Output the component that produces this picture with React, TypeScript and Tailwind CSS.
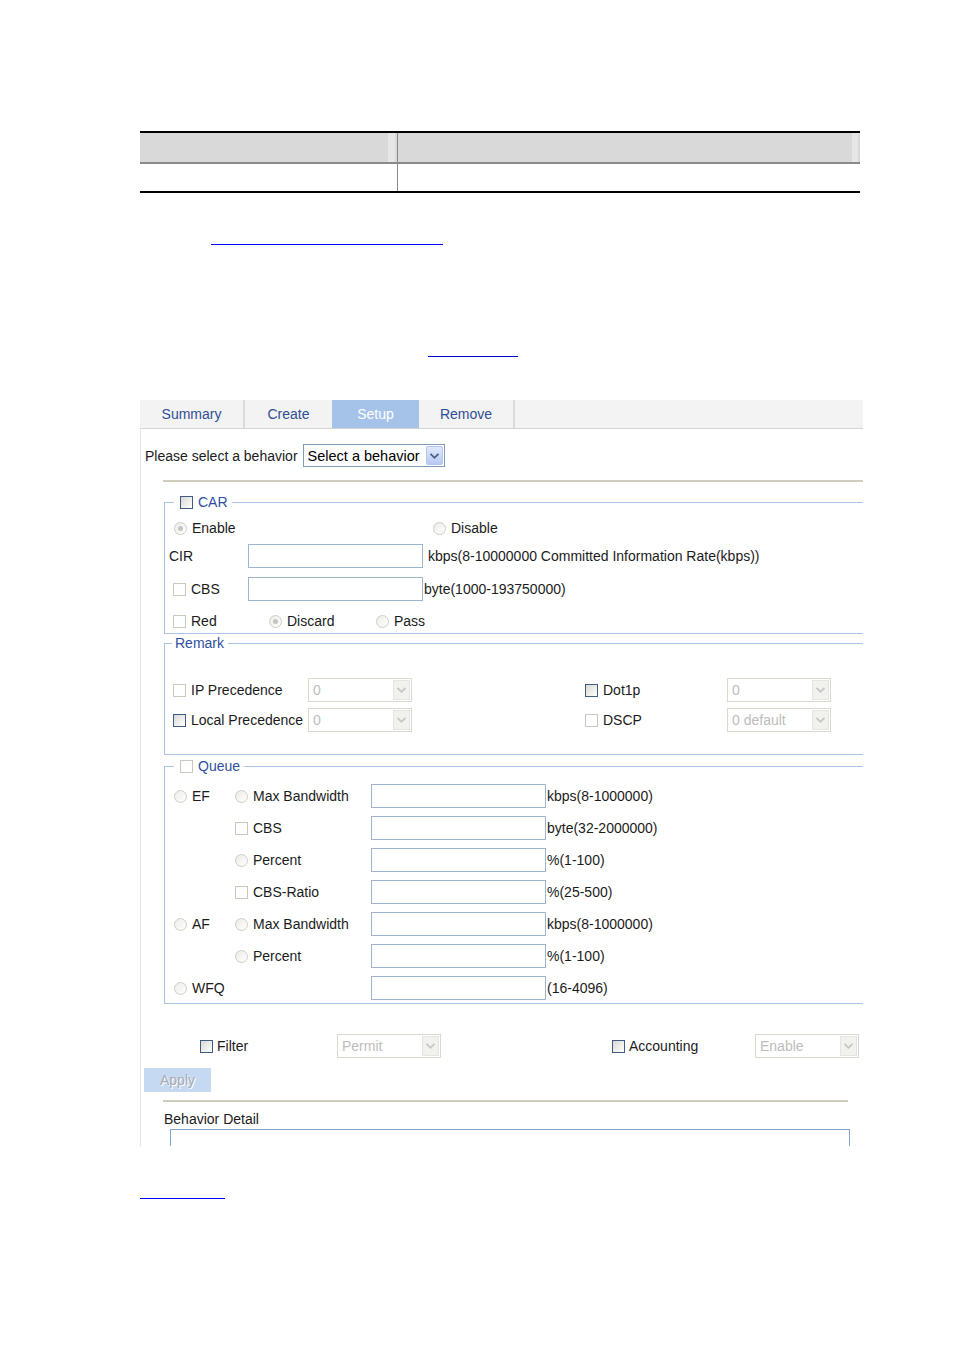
import React from "react";

const label = "text-[14px] leading-[18px] text-[#1b1b1b] whitespace-nowrap";
const legendText = "text-[14px] leading-[18px] text-[#3050a0] whitespace-nowrap";

function Box({ on }: { on?: boolean }) {
  return on ? (
    <span className="inline-block w-[13px] h-[13px] shrink-0 border border-[#3f5c82] bg-linear-to-br from-[#d9d9d3] to-white" />
  ) : (
    <span className="inline-block w-[13px] h-[13px] shrink-0 border border-[#cac8bd] bg-white" />
  );
}

function Radio({ dot }: { dot?: boolean }) {
  return (
    <span className="inline-flex items-center justify-center w-[13px] h-[13px] shrink-0 rounded-full border border-[#cfcdc3] bg-linear-to-br from-[#ecebe6] to-white">
      {dot && <span className="w-[5px] h-[5px] rounded-full bg-[#c4c4c4]" />}
    </span>
  );
}

function TextBox({ w }: { w: string }) {
  return <span className={`block h-[24px] shrink-0 border border-[#9db6cf] bg-white ${w}`} />;
}

function Chevron({ color }: { color: string }) {
  return (
    <svg width="11" height="8" viewBox="0 0 11 8">
      <path d="M1.5 1.8 L5.5 5.8 L9.5 1.8" fill="none" stroke={color} strokeWidth="1.8" />
    </svg>
  );
}

function DisabledSelect({ value }: { value: string }) {
  return (
    <div className="flex items-center justify-between w-[104px] h-[24px] shrink-0 border border-[#dbd8cd] bg-white pl-[4px] pr-[1px]">
      <span className="text-[14px] leading-[18px] text-[#bdbdbd] whitespace-nowrap">{value}</span>
      <span className="flex items-center justify-center w-[17px] h-[20px] bg-[#f1f1ed] border border-[#e6e4dc]">
        <Chevron color="#c6c6c6" />
      </span>
    </div>
  );
}

function CheckLabel({ on, text, w }: { on?: boolean; text: string; w: string }) {
  return (
    <div className={`flex items-center gap-[5px] shrink-0 ${w}`}>
      <Box on={on} />
      <span className={label}>{text}</span>
    </div>
  );
}

function RadioLabel({ dot, text, w }: { dot?: boolean; text: string; w: string }) {
  return (
    <div className={`flex items-center gap-[5px] shrink-0 ${w}`}>
      <Radio dot={dot} />
      <span className={label}>{text}</span>
    </div>
  );
}

function QueueRow({
  first,
  second,
  unit,
}: {
  first?: React.ReactNode;
  second?: React.ReactNode;
  unit: string;
}) {
  return (
    <div className="flex items-center h-[24px] ml-[5px]">
      <div className="w-[61px] shrink-0">{first}</div>
      <div className="w-[136px] shrink-0">{second}</div>
      <TextBox w="w-[175px]" />
      <span className={`${label} ml-[1px] text-[13.5px]`}>{unit}</span>
    </div>
  );
}

export default function App() {
  return (
    <div className="w-[954px] h-[1350px] bg-white pt-[131px] font-['Liberation_Sans',Arial,sans-serif]">
      {/* table */}
      <div className="ml-[140px] w-[720px] border-t-2 border-b-2 border-black">
        <div className="grid grid-cols-[258px_1fr] h-[31px] bg-[#d9d9d9] border-b-2 border-[#8a8a8a]">
          <div className="flex justify-end border-r border-[#8a8a8a]">
            <span className="w-[7px] h-full bg-[#e6e6e6] mr-[2px]" />
          </div>
          <div className="flex justify-end">
            <span className="w-[6px] h-full bg-[#e6e6e6] mr-[2px]" />
          </div>
        </div>
        <div className="grid grid-cols-[258px_1fr] h-[27px]">
          <div className="border-r border-[#8a8a8a]" />
          <div />
        </div>
      </div>

      <a className="block ml-[211px] mt-[51px] w-[232px] h-[1px] border-b border-[#0000ff]" />
      <a className="block ml-[428px] mt-[111px] w-[90px] h-[1px] border-b border-[#0000cc]" />

      {/* panel */}
      <div className="ml-[140px] mt-[43px] w-[723px] h-[746px] overflow-hidden flex flex-col">
        <div className="flex h-[29px] shrink-0 bg-[#f3f3f3] border-b border-[#d4d4d4] text-[14px] text-[#2f4f94]">
          <div className="w-[105px] flex items-center justify-center border-r-2 border-[#dadada] pt-[1px]">Summary</div>
          <div className="w-[87px] flex items-center justify-center pt-[1px]">Create</div>
          <div className="w-[87px] flex items-center justify-center bg-[#a5c3e8] text-white pt-[1px]">Setup</div>
          <div className="w-[96px] flex items-center justify-center border-r-2 border-[#dadada] pt-[1px]">Remove</div>
        </div>

        <div className="flex-1 border-l border-[#e3e3e3]">
          <div className="flex items-center h-[23px] mt-[15px] ml-[4px]">
            <span className={label}>Please select a behavior</span>
            <div className="flex items-center justify-between ml-[5px] w-[142px] h-[23px] border border-[#7f9db9] bg-white pl-[4px] pr-[1px]">
              <span className="text-[14.5px] leading-[18px] text-black whitespace-nowrap">Select a behavior</span>
              <span className="flex items-center justify-center w-[17px] h-[19px] rounded-[2px] border border-[#b4c6ee] bg-linear-to-b from-[#dfe8fc] to-[#b8caf3]">
                <Chevron color="#4b5f86" />
              </span>
            </div>
          </div>

          <div className="ml-[22px] mt-[13px] h-[2px] bg-[#d0ccbe]" />

          {/* CAR */}
          <fieldset className="ml-[23px] mt-[11px] border border-r-0 border-[#a9c4e7] pl-[4px]">
            <legend className="ml-[5px] pl-[6px] pr-[4px]">
              <span className="flex items-center gap-[5px] h-[18px]">
                <Box on />
                <span className={legendText}>CAR</span>
              </span>
            </legend>
            <div className="flex items-center h-[20px] mt-[7px] ml-[5px]">
              <RadioLabel dot text="Enable" w="w-[259px]" />
              <RadioLabel text="Disable" w="w-auto" />
            </div>
            <div className="flex items-center h-[24px] mt-[6px]">
              <span className={`${label} w-[79px]`}>CIR</span>
              <TextBox w="w-[175px]" />
              <span className={`${label} ml-[5px]`}>kbps(8-10000000 Committed Information Rate(kbps))</span>
            </div>
            <div className="flex items-center h-[24px] mt-[9px] ml-[4px]">
              <CheckLabel text="CBS" w="w-[75px]" />
              <TextBox w="w-[175px]" />
              <span className={`${label} ml-[1px]`}>byte(1000-193750000)</span>
            </div>
            <div className="flex items-center h-[24px] mt-[8px] ml-[4px]">
              <CheckLabel text="Red" w="w-[96px]" />
              <RadioLabel dot text="Discard" w="w-[107px]" />
              <RadioLabel text="Pass" w="w-auto" />
            </div>
          </fieldset>

          {/* Remark */}
          <fieldset className="ml-[23px] border border-r-0 border-[#a9c4e7] pl-[4px] pb-[22px]">
            <legend className="ml-[3px] pl-[3px] pr-[4px]">
              <span className={`${legendText} block h-[18px]`}>Remark</span>
            </legend>
            <div className="flex items-center h-[24px] mt-[26px] ml-[4px]">
              <CheckLabel text="IP Precedence" w="w-[135px]" />
              <DisabledSelect value="0" />
              <CheckLabel on text="Dot1p" w="w-[142px] ml-[173px]" />
              <DisabledSelect value="0" />
            </div>
            <div className="flex items-center h-[24px] mt-[6px] ml-[4px]">
              <CheckLabel on text="Local Precedence" w="w-[135px]" />
              <DisabledSelect value="0" />
              <CheckLabel text="DSCP" w="w-[142px] ml-[173px]" />
              <DisabledSelect value="0 default" />
            </div>
          </fieldset>

          {/* Queue */}
          <fieldset className="ml-[23px] mt-[2px] border border-r-0 border-[#a9c4e7] pl-[4px] pb-[3px]">
            <legend className="ml-[5px] pl-[6px] pr-[4px]">
              <span className="flex items-center gap-[5px] h-[18px]">
                <Box />
                <span className={legendText}>Queue</span>
              </span>
            </legend>
            <div className="flex flex-col gap-[8px] mt-[9px]">
              <QueueRow
                first={<RadioLabel text="EF" w="w-auto" />}
                second={<RadioLabel text="Max Bandwidth" w="w-auto" />}
                unit="kbps(8-1000000)"
              />
              <QueueRow second={<CheckLabel text="CBS" w="w-auto" />} unit="byte(32-2000000)" />
              <QueueRow second={<RadioLabel text="Percent" w="w-auto" />} unit="%(1-100)" />
              <QueueRow second={<CheckLabel text="CBS-Ratio" w="w-auto" />} unit="%(25-500)" />
              <QueueRow
                first={<RadioLabel text="AF" w="w-auto" />}
                second={<RadioLabel text="Max Bandwidth" w="w-auto" />}
                unit="kbps(8-1000000)"
              />
              <QueueRow second={<RadioLabel text="Percent" w="w-auto" />} unit="%(1-100)" />
              <QueueRow first={<RadioLabel text="WFQ" w="w-auto" />} unit="(16-4096)" />
            </div>
          </fieldset>

          <div className="flex items-center h-[24px] mt-[30px] ml-[59px]">
            <div className="flex items-center gap-[4px] w-[137px] shrink-0">
              <Box on />
              <span className={label}>Filter</span>
            </div>
            <DisabledSelect value="Permit" />
            <div className="flex items-center gap-[4px] w-[143px] shrink-0 ml-[171px]">
              <Box on />
              <span className={label}>Accounting</span>
            </div>
            <DisabledSelect value="Enable" />
          </div>

          <button className="block ml-[3px] mt-[10px] w-[67px] h-[24px] bg-[#c6d9f2] text-[14px] text-[#a8acb2] [text-shadow:1px_1px_0_#ffffff] text-left pl-[16px]">
            Apply
          </button>

          <div className="ml-[22px] mt-[8px] w-[685px] h-[2px] bg-[#d0ccbe]" />

          <div className={`${label} ml-[23px] mt-[8px] h-[18px]`}>Behavior Detail</div>
          <div className="ml-[29px] mt-[1px] w-[680px] h-[40px] border border-[#7ea5c9] bg-white" />
        </div>
      </div>

      <a className="block ml-[140px] mt-[52px] w-[85px] h-[1px] border-b border-[#0000ff]" />
    </div>
  );
}
